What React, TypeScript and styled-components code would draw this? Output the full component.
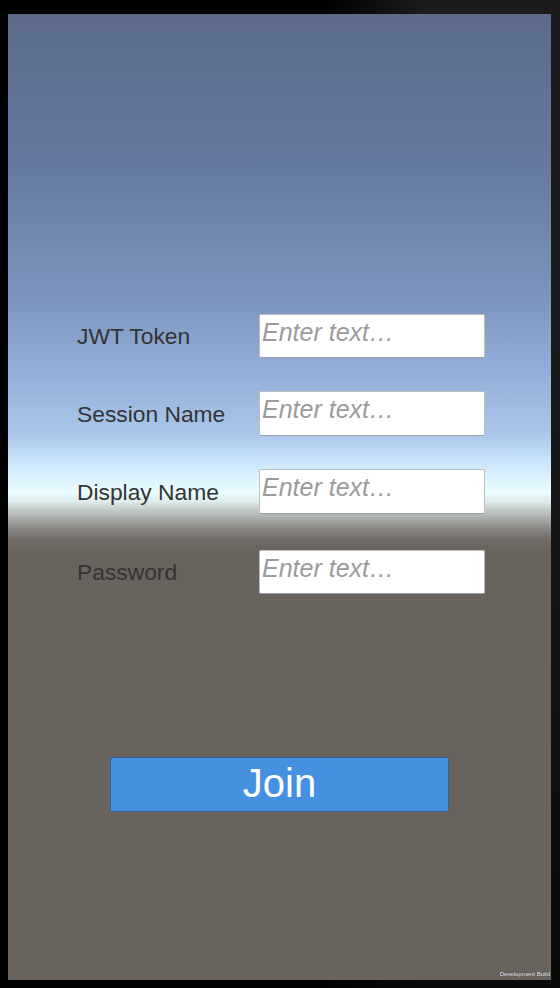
import React from "react";
import styled, { createGlobalStyle } from "styled-components";

const Global = createGlobalStyle`
  html, body { margin: 0; padding: 0; background: #000; }
  body { font-family: "Liberation Sans", Arial, sans-serif; }
`;

const Frame = styled.div`
  width: 560px;
  height: 988px;
  box-sizing: border-box;
  padding: 14px 9px 8px 8px;
  background:
    linear-gradient(to bottom, rgba(0,0,0,0) 30%, rgba(0,0,0,0.65) 100%),
    linear-gradient(to right, #000 320px, #1b1b1b 420px);
`;

const Viewport = styled.div`
  position: relative;
  width: 543px;
  height: 966px;
  box-sizing: border-box;
  padding-top: 300px;
  display: flex;
  flex-direction: column;
  background: linear-gradient(
    to bottom,
    #5c6b8b 0px,
    #6579a0 150px,
    #7b93bd 280px,
    #93afd9 360px,
    #abc6ea 420px,
    #cfe9fc 452px,
    #e9fcff 478px,
    #dfeeee 487px,
    #c3cbc8 496px,
    #a4a7a4 506px,
    #878481 516px,
    #716b67 526px,
    #69635d 539px,
    #69635d 100%
  );
`;

const Form = styled.div`
  display: flex;
  flex-direction: column;
  gap: 33px;
  padding-left: 69px;
`;

const Row = styled.div<{ $h: number; $mt?: number }>`
  display: flex;
  align-items: stretch;
  height: ${(p) => p.$h}px;
  margin-top: ${(p) => p.$mt ?? 0}px;
`;

const Label = styled.div`
  width: 182px;
  font-size: 22.8px;
  color: #343434;
  display: flex;
  align-items: center;
  padding-top: 1px;
`;

const Input = styled.input`
  width: 226px;
  height: 100%;
  box-sizing: border-box;
  border: 1px solid #bdbdbd;
  border-bottom-color: #9aa0a6;
  border-radius: 2px;
  background: #fff;
  padding: 4px 2px 12px 2px;
  margin: 0;
  outline: none;
  font-family: "Liberation Sans", Arial, sans-serif;
  font-size: 25px;
  line-height: 25px;
  display: block;
  &::placeholder {
    color: #9b9b9b;
    font-style: italic;
  }
`;

const JoinButton = styled.button`
  align-self: center;
  margin-top: 163px;
  width: 339px;
  height: 55px;
  box-sizing: border-box;
  background: #4590e0;
  border: 1px solid #3b5f8a;
  border-radius: 2px;
  color: #fff;
  font-family: "Liberation Sans", Arial, sans-serif;
  font-size: 40px;
  padding: 0 0 2px 0;
  cursor: pointer;
`;

const DevBuild = styled.div`
  position: absolute;
  right: 1px;
  bottom: 3px;
  font-family: "Liberation Sans", Arial, sans-serif;
  font-size: 6px;
  color: #fff;
  white-space: nowrap;
  text-shadow: 0 0 1px #000;
`;

const fields: { label: string; h: number; mt?: number }[] = [
  { label: "JWT Token", h: 44 },
  { label: "Session Name", h: 45 },
  { label: "Display Name", h: 45 },
  { label: "Password", h: 44, mt: 3 },
];

export default function App() {
  return (
    <>
      <Global />
      <Frame>
        <Viewport>
          <Form>
            {fields.map((f) => (
              <Row key={f.label} $h={f.h} $mt={f.mt}>
                <Label>{f.label}</Label>
                <Input placeholder="Enter text…" />
              </Row>
            ))}
          </Form>
          <JoinButton>Join</JoinButton>
          <DevBuild>Development Build</DevBuild>
        </Viewport>
      </Frame>
    </>
  );
}
